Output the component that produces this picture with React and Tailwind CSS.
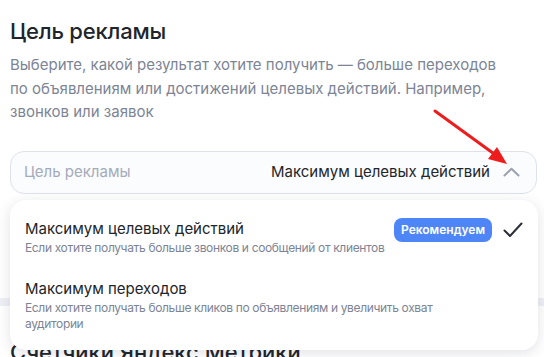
import React from 'react';

const font = { fontFamily: 'Inter, "Noto Sans", sans-serif' };

function Chevron() {
  return (
    <svg width="17" height="10" viewBox="0 0 17 10" fill="none" className="shrink-0">
      <path d="M1.5 8.5L8.5 1.8L15.5 8.5" stroke="#9ba1ad" strokeWidth="2" strokeLinecap="round" strokeLinejoin="round" />
    </svg>
  );
}

function Check() {
  return (
    <svg width="20" height="16" viewBox="0 0 20 16" fill="none">
      <path d="M1.5 8.5L7 14L18.5 1.5" stroke="#2b2f36" strokeWidth="2" strokeLinecap="round" strokeLinejoin="round" />
    </svg>
  );
}

export default function App() {
  return (
    <div className="relative w-[544px] h-[357px] overflow-hidden bg-white" style={font}>
      <div className="pl-[10px] pt-[17px]">
        <h1 className="text-[22px] leading-[28px] font-medium text-[#21252b] tracking-[-0.2px]">Цель рекламы</h1>
        <p className="mt-[8px] text-[15px] leading-[23.5px] text-[#7c8495] w-[505px]">
          Выберите, какой результат хотите получить — больше переходов по объявлениям или достижений целевых действий. Например, звонков или заявок
        </p>

        <div className="relative mt-[27px] w-[527px]">
          <div className="h-[43px] rounded-[14px] border border-[#dfe2ea] bg-[#fbfcfd] flex items-center pl-[13px] pr-[16px]">
            <span className="text-[15px] text-[#a4abba]">Цель рекламы</span>
            <span className="ml-auto text-[15px] text-[#22262c]">Максимум целевых действий</span>
            <span className="ml-[13px] mt-[-1px]"><Chevron /></span>
          </div>

          <div className="absolute left-0 top-[49px] w-[528px] h-[150px] z-10 rounded-[16px] bg-white shadow-[0_3px_14px_rgba(40,50,80,0.14)] px-[15px] pt-[19px]">
            <div className="flex items-start">
              <div>
                <div className="text-[15px] leading-[20px] text-[#21252b]">Максимум целевых действий</div>
                <div className="text-[12px] leading-[16px] text-[#7c8495] mt-[1px] whitespace-nowrap tracking-[-0.35px]">Если хотите получать больше звонков и сообщений от клиентов</div>
              </div>
              <span className="ml-auto mt-[-1px] h-[24px] px-[7px] rounded-[8px] bg-[#4f86f7] text-white text-[12px] font-semibold flex items-center">Рекомендуем</span>
              <span className="ml-[11px] mt-[3px]"><Check /></span>
            </div>
            <div className="mt-[23px]">
              <div className="text-[15px] leading-[20px] text-[#21252b]">Максимум переходов</div>
              <div className="text-[12px] leading-[16px] text-[#7c8495] mt-[1px] w-[455px] tracking-[-0.35px]">Если хотите получать больше кликов по объявлениям и увеличить охват аудитории</div>
            </div>
          </div>
        </div>
      </div>

      <div className="mt-[104px] h-[8px] bg-[#eef0f5]" />
      <div className="px-[10px] mt-[32px] text-[22px] leading-[28px] font-medium text-[#21252b] whitespace-nowrap">Счетчики Яндекс Метрики</div>

      <svg className="absolute left-0 top-0 z-20 pointer-events-none" width="544" height="357" viewBox="0 0 544 357">
        <line x1="435" y1="111" x2="497" y2="156" stroke="#ee1d1d" strokeWidth="3" strokeLinecap="round" />
        <path d="M507 164L488 159L497 147Z" fill="#ee1d1d" />
      </svg>
    </div>
  );
}
